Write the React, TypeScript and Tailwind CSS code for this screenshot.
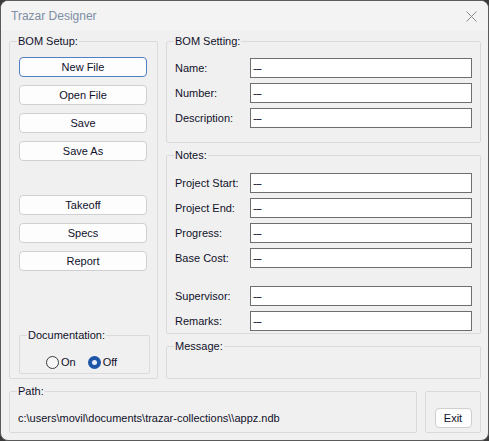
const FONT = { fontFamily: '"Liberation Sans", Arial, sans-serif' };

function Btn({ label, primary = false }: { label: string; primary?: boolean }) {
  return (
    <button
      type="button"
      className={
        "flex h-[20px] w-[128px] items-center justify-center rounded-[4px] border bg-[#fdfdfd] text-[11px] leading-none text-[#10102a] " +
        (primary ? "border-[#4f7fc4]" : "border-[#d0d0d0]")
      }
    >
      {label}
    </button>
  );
}

function Group({
  title,
  className = "",
  children
}: {
  title: string;
  className?: string;
  children?: React.ReactNode;
}) {
  return (
    <fieldset
      className={"m-0 min-w-0 rounded-[2px] border border-[#dadada] p-0 " + className}
    >
      <legend className="ml-[7px] px-[1px] text-[11px] leading-[14px] text-[#10102a]">
        {title}
      </legend>
      {children}
    </fieldset>
  );
}

function Field({ label }: { label: string }) {
  return (
    <div className="flex h-[20px] items-center">
      <span className="w-[75px] text-[11px] text-[#10102a]">{label}</span>
      <div className="flex h-[20px] w-[222px] items-center border border-[#6e6e6e] bg-white pl-[2px]">
        <span className="text-[11px] leading-none tracking-[-1px] text-[#10102a]">---</span>
      </div>
    </div>
  );
}

function Radio({ label, checked = false }: { label: string; checked?: boolean }) {
  return (
    <label className="flex items-center gap-[2px] text-[11px] text-[#10102a]">
      {checked ? (
        <span className="flex h-[13px] w-[13px] items-center justify-center rounded-full bg-[#1d55a8]">
          <span className="h-[5px] w-[5px] rounded-full bg-[#e8eefa]" />
        </span>
      ) : (
        <span className="h-[13px] w-[13px] rounded-full border border-[#3a3a3a] bg-[#f7f7f7]" />
      )}
      {label}
    </label>
  );
}

export default function App() {
  return (
    <div className="h-[441px] w-[489px] bg-[#3a3a3a]" style={FONT}>
      <div className="flex h-full flex-col overflow-hidden rounded-[8px] border border-[#5a5a5a] bg-[#f0f0f0]">
        {/* title bar */}
        <div className="flex h-[30px] shrink-0 items-center justify-between bg-[#f3f3f3] pl-[10px] pr-[11px]">
          <span className="text-[12px] text-[#7d8ea2]">Trazar Designer</span>
          <svg width="11" height="11" viewBox="0 0 11 11" className="text-[#8a8a8a]">
            <path d="M0.5 0.5 L10.5 10.5 M10.5 0.5 L0.5 10.5" stroke="currentColor" strokeWidth="1" fill="none" />
          </svg>
        </div>

        <div className="flex flex-col pl-[8px] pr-[7px] pt-[3px]">
          <div className="flex h-[345px] gap-[8px]">
            {/* left column */}
            <Group title="BOM Setup:" className="flex h-[345px] w-[149px] flex-col">
              <div className="flex h-full flex-col pb-[4px] pl-[9px] pt-[9px]">
                <div className="flex flex-col gap-[8px]">
                  <Btn label="New File" primary />
                  <Btn label="Open File" />
                  <Btn label="Save" />
                  <Btn label="Save As" />
                </div>
                <div className="mt-[34px] flex flex-col gap-[8px]">
                  <Btn label="Takeoff" />
                  <Btn label="Specs" />
                  <Btn label="Report" />
                </div>
                <Group title="Documentation:" className="mt-auto h-[46px] w-[131px]">
                  <div className="flex items-center gap-[12px] pl-[26px] pt-[12px]">
                    <Radio label="On" />
                    <Radio label="Off" checked />
                  </div>
                </Group>
              </div>
            </Group>

            {/* right column */}
            <div className="flex w-[315px] flex-col gap-[5px]">
              <Group title="BOM Setting:" className="h-[109px]">
                <div className="flex flex-col gap-[5px] pl-[8px] pt-[10px]">
                  <Field label="Name:" />
                  <Field label="Number:" />
                  <Field label="Description:" />
                </div>
              </Group>
              <Group title="Notes:" className="h-[186px]">
                <div className="flex flex-col gap-[5px] pl-[8px] pt-[11px]">
                  <Field label="Project Start:" />
                  <Field label="Project End:" />
                  <Field label="Progress:" />
                  <Field label="Base Cost:" />
                  <div className="h-[8px]" />
                  <Field label="Supervisor:" />
                  <Field label="Remarks:" />
                </div>
              </Group>
              <Group title="Message:" className="h-[40px]" />
            </div>
          </div>

          {/* bottom row */}
          <div className="mt-[5px] flex h-[49px] gap-[8px]">
            <Group title="Path:" className="h-[49px] flex-1">
              <div className="pl-[8px] pt-[13px] text-[11px] leading-[14px] text-[#10102a]">
                c:\users\movil\documents\trazar-collections\\appz.ndb
              </div>
            </Group>
            <div className="mt-[7px] flex h-[42px] w-[56px] items-end justify-center rounded-[2px] border border-[#dadada] pb-[4px]">
              <button
                type="button"
                className="flex h-[20px] w-[37px] items-center justify-center rounded-[4px] border border-[#cfcfcf] bg-[#fdfdfd] text-[11px] leading-none text-[#10102a]"
              >
                Exit
              </button>
            </div>
          </div>
        </div>
      </div>
    </div>
  );
}
